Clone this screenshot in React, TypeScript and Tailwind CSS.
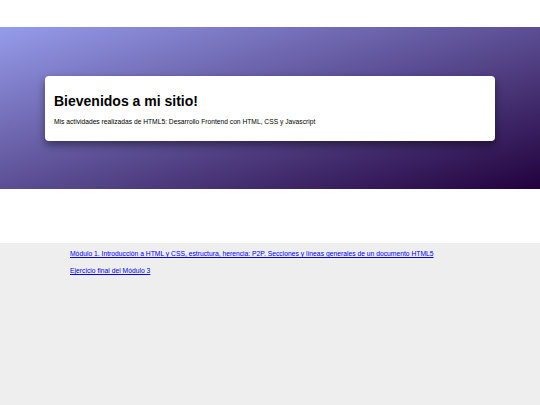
export default function App() {
  return (
    <div className="min-h-[405px] flex flex-col bg-white font-['Liberation_Sans',Arial,sans-serif]">
      <div className="h-[27px]" />
      <header className="h-[162px] flex items-center px-[45px] bg-[linear-gradient(to_bottom_right,#969ceb,#22013d)]">
        <div className="w-full h-[65px] bg-white rounded-[4px] shadow-[0_4px_8px_rgba(0,0,0,0.45)] px-[9px] pt-[17px]">
          <h1 className="text-[14px] leading-[17px] font-bold text-black">Bievenidos a mi sitio!</h1>
          <p className="mt-[8px] text-[6.7px] leading-[8px] text-black">
            Mis actividades realizadas de HTML5: Desarrollo Frontend con HTML, CSS y Javascript
          </p>
        </div>
      </header>
      <div className="h-[54px]" />
      <main className="flex-1 bg-[#eeeeee] pt-[7px] px-[70px] flex flex-col gap-[9px]">
        <a href="#" className="text-[6.75px] leading-[8px] text-[#0000ee] underline self-start">
          Módulo 1. Introducción a HTML y CSS, estructura, herencia: P2P. Secciones y líneas generales de un documento HTML5
        </a>
        <a href="#" className="text-[6.75px] leading-[8px] text-[#0000ee] underline self-start">
          Ejercicio final del Módulo 3
        </a>
      </main>
    </div>
  );
}
